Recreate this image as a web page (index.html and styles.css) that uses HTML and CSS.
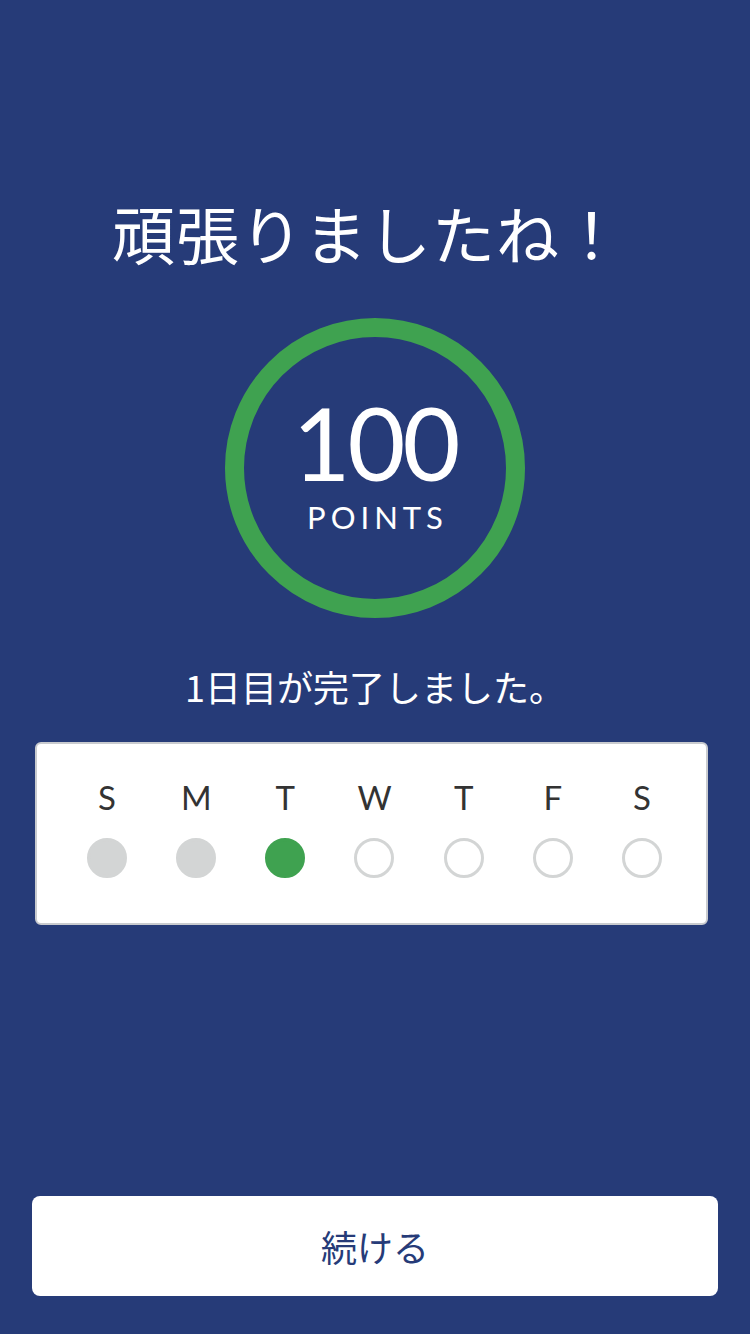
FILE: index.html
```html
<!DOCTYPE html>
<html lang="ja">
<head>
<meta charset="utf-8">
<title>頑張りましたね！</title>
<link rel="stylesheet" href="styles.css">
</head>
<body>
<main class="screen">
  <h1 class="title">頑張りましたね！</h1>
  <div class="ring">
    <div class="score">100</div>
    <div class="unit">POINTS</div>
  </div>
  <p class="message">1日目が完了しました。</p>
  <section class="week">
    <div class="day"><span class="label">S</span><span class="dot done"></span></div>
    <div class="day"><span class="label">M</span><span class="dot done"></span></div>
    <div class="day"><span class="label">T</span><span class="dot today"></span></div>
    <div class="day"><span class="label">W</span><span class="dot"></span></div>
    <div class="day"><span class="label">T</span><span class="dot"></span></div>
    <div class="day"><span class="label">F</span><span class="dot"></span></div>
    <div class="day"><span class="label">S</span><span class="dot"></span></div>
  </section>
  <button class="continue" type="button">続ける</button>
</main>
</body>
</html>
```

FILE: styles.css
```css
* { box-sizing: border-box; }
html, body {
  margin: 0;
  padding: 0;
  background: #263b78;
}
.screen {
  width: 750px;
  height: 1334px;
  display: flex;
  flex-direction: column;
  align-items: center;
  font-family: Lato, "Noto Sans CJK JP", sans-serif;
  color: #ffffff;
}
.title {
  margin: 192px 14px 0 0;
  font-family: "Noto Sans CJK JP", sans-serif;
  font-weight: 400;
  font-size: 63px;
  line-height: 80px;
  letter-spacing: 1px;
}
.ring {
  margin-top: 46px;
  width: 300px;
  height: 300px;
  border: 19px solid #3fa250;
  border-radius: 50%;
  display: flex;
  flex-direction: column;
  align-items: center;
  justify-content: center;
}
.score {
  font-family: Lato, sans-serif;
  font-size: 100px;
  line-height: 84px;
  margin-top: -2px;
  letter-spacing: -3px;
}
.unit {
  font-family: Lato, sans-serif;
  font-size: 31px;
  line-height: 36px;
  letter-spacing: 5px;
  margin-top: 15px;
  margin-right: -5px;
}
.message {
  margin: 44px 0 0;
  font-family: "Noto Sans CJK JP", sans-serif;
  font-size: 36px;
  line-height: 48px;
}
.week {
  margin-top: 32px;
  margin-right: 8px;
  width: 673px;
  height: 183px;
  background: #ffffff;
  border: 2px solid #c9cbcf;
  border-radius: 6px;
  display: grid;
  grid-template-columns: repeat(7, 1fr);
  padding: 33px 19px 0 26px;
  align-content: start;
}
.day {
  display: flex;
  flex-direction: column;
  align-items: center;
  gap: 21px;
}
.label {
  font-family: Lato, sans-serif;
  font-size: 33px;
  line-height: 40px;
  color: #333333;
}
.dot {
  width: 40px;
  height: 40px;
  border-radius: 50%;
  border: 3px solid #d3d5d5;
  background: #ffffff;
}
.dot.done { background: #d3d5d5; border-color: #d3d5d5; }
.dot.today { background: #3fa250; border-color: #3fa250; }
.continue {
  margin-top: auto;
  margin-bottom: 38px;
  width: 686px;
  height: 100px;
  border: 0;
  border-radius: 8px;
  background: #ffffff;
  color: #263b78;
  font-family: "Noto Sans CJK JP", sans-serif;
  font-size: 36px;
  cursor: pointer;
}
```
